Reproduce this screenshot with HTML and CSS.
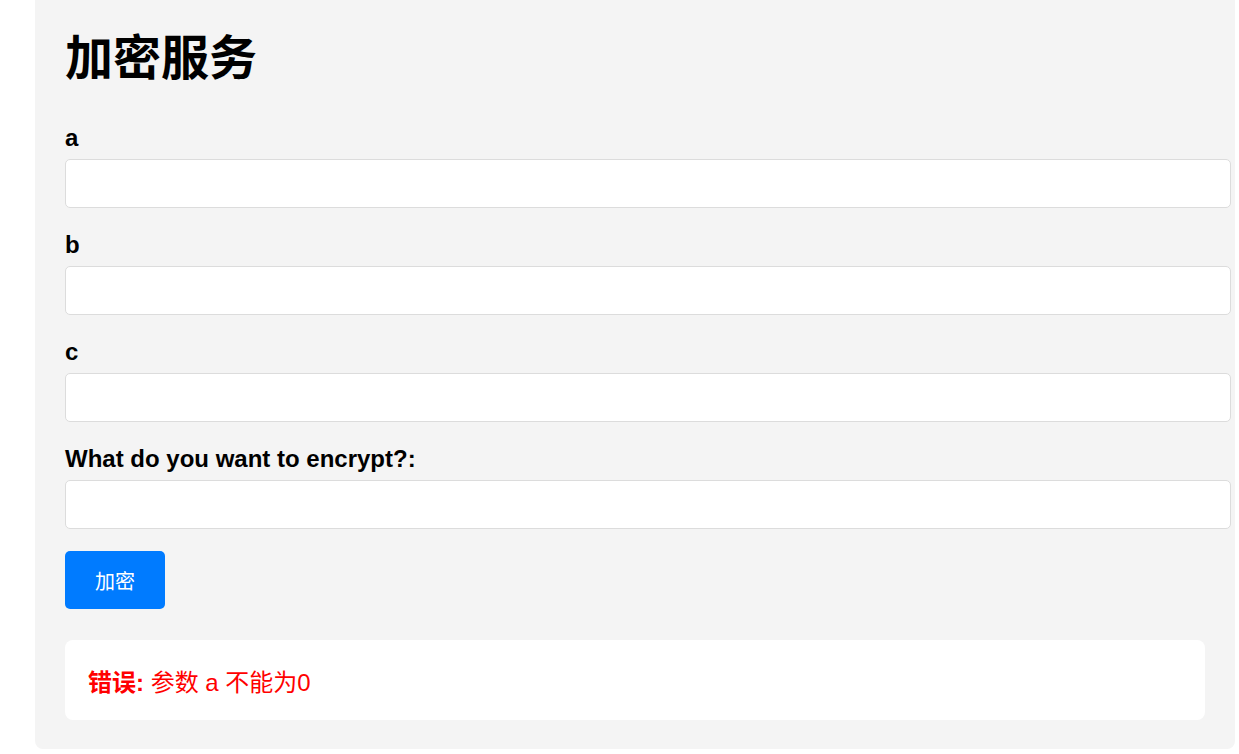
FILE: index.html
```html
<!DOCTYPE html>
<html lang="zh-CN">
<head>
<meta charset="utf-8">
<title>加密服务</title>
<link rel="stylesheet" href="styles.css">
</head>
<body>
<div class="container">
  <h1 class="title">加密服务</h1>
  <form class="form">
    <div class="field">
      <label class="label" for="a">a</label>
      <input class="input" id="a" type="text">
    </div>
    <div class="field">
      <label class="label" for="b">b</label>
      <input class="input" id="b" type="text">
    </div>
    <div class="field">
      <label class="label" for="c">c</label>
      <input class="input" id="c" type="text">
    </div>
    <div class="field">
      <label class="label" for="msg">What do you want to encrypt?:</label>
      <input class="input" id="msg" type="text">
    </div>
    <button class="button" type="button">加密</button>
  </form>
  <div class="error"><strong class="error-title">错误:</strong> 参数 a 不能为0</div>
</div>
</body>
</html>
```

FILE: styles.css
```css
html, body {
  margin: 0;
  padding: 0;
  background: #ffffff;
}

body {
  font-family: "Liberation Sans", Arial, "Noto Sans CJK SC", sans-serif;
  color: #000;
}

.container {
  box-sizing: content-box;
  width: 1140px;
  margin-left: 35px;
  padding: 25px 30px 29px;
  background: #f4f4f4;
  border-radius: 0 0 8px 8px;
}

.title {
  margin: 0 0 41px;
  font-family: "Noto Sans CJK SC", sans-serif;
  font-size: 48px;
  font-weight: 700;
  line-height: 58px;
}

.form {
  margin: 0;
}

.field {
  margin-bottom: 23px;
}

.field:last-of-type {
  margin-bottom: 22px;
}

.label {
  display: block;
  margin-bottom: 8px;
  font-size: 24px;
  font-weight: 700;
  line-height: 27px;
}

.input {
  display: block;
  width: 100%;
  box-sizing: content-box;
  margin: 0;
  padding: 15px 12px;
  font-size: 16px;
  line-height: 17px;
  height: 17px;
  border: 1px solid #dcdcdc;
  border-radius: 5px;
  background: #fff;
  font-family: "Liberation Sans", sans-serif;
}

.button {
  display: block;
  width: 100px;
  height: 58px;
  padding: 0;
  margin: 0;
  border: none;
  border-radius: 5px;
  background: #007bff;
  color: #fff;
  font-family: "Noto Sans CJK SC", sans-serif;
  font-size: 20px;
}

.error {
  margin-top: 31px;
  height: 80px;
  box-sizing: border-box;
  padding: 0 23px;
  display: flex;
  align-items: center;
  background: #fff;
  border-radius: 8px;
  color: #ff0000;
  font-family: "Liberation Sans", "Noto Sans CJK SC", sans-serif;
  font-size: 24px;
  white-space: pre;
}

.error-title {
  font-weight: 700;
}
```
